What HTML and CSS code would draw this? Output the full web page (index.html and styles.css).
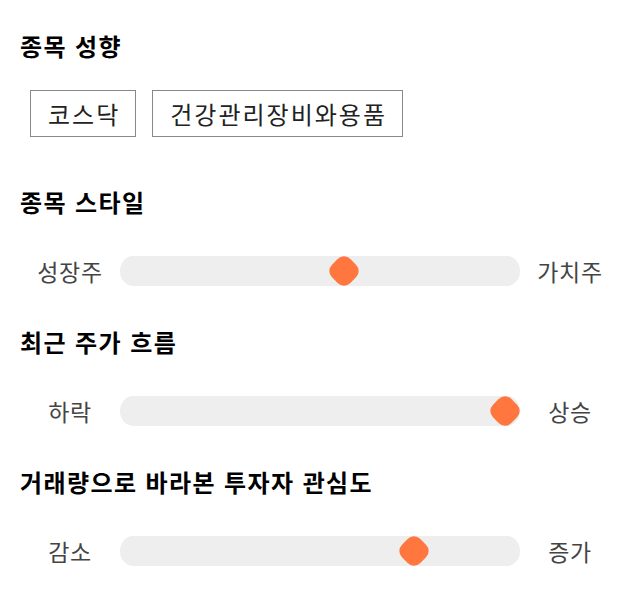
FILE: index.html
```html
<!DOCTYPE html>
<html lang="ko">
<head>
<meta charset="utf-8">
<link rel="stylesheet" href="styles.css">
</head>
<body>
<main class="page">
  <section class="section first">
    <h2 class="title">종목 성향</h2>
    <div class="chips">
      <span class="chip">코스닥</span>
      <span class="chip">건강관리장비와용품</span>
    </div>
  </section>

  <section class="section after-chips">
    <h2 class="title">종목 스타일</h2>
    <div class="slider-row">
      <span class="side">성장주</span>
      <div class="track"><span class="thumb" style="--v:0.565"></span></div>
      <span class="side">가치주</span>
    </div>
  </section>

  <section class="section">
    <h2 class="title">최근 주가 흐름</h2>
    <div class="slider-row">
      <span class="side">하락</span>
      <div class="track"><span class="thumb" style="--v:1"></span></div>
      <span class="side">상승</span>
    </div>
  </section>

  <section class="section">
    <h2 class="title">거래량으로 바라본 투자자 관심도</h2>
    <div class="slider-row">
      <span class="side">감소</span>
      <div class="track"><span class="thumb" style="--v:0.755"></span></div>
      <span class="side">증가</span>
    </div>
  </section>
</main>
</body>
</html>
```

FILE: styles.css
```css
* { box-sizing: border-box; }

html, body {
  margin: 0;
  padding: 0;
  background: #ffffff;
}

body {
  font-family: "Noto Sans CJK KR", "Noto Sans", sans-serif;
  color: #111111;
}

.page {
  width: 640px;
  padding: 31px 20px 0 20px;
}

.section {
  margin-top: 41px;
}

.section.first {
  margin-top: 0;
}

.section.after-chips {
  margin-top: 50px;
}

.title {
  margin: 0;
  font-size: 24px;
  line-height: 30px;
  font-weight: 700;
  color: #000000;
  letter-spacing: 1.4px;
}

.chips {
  display: flex;
  gap: 16px;
  margin-top: 29px;
  padding-left: 10px;
}

.chip {
  display: flex;
  align-items: center;
  height: 47px;
  padding: 0 15px 0 17px;
  border: 1px solid #888888;
  font-size: 24px;
  letter-spacing: 2px;
  color: #222222;
}

.slider-row {
  display: flex;
  align-items: center;
  margin-top: 39px;
  height: 30px;
}

.side {
  width: 100px;
  text-align: center;
  font-size: 23px;
  line-height: 30px;
  letter-spacing: 0.6px;
  color: #444444;
}

.track {
  position: relative;
  flex: 1;
  height: 30px;
  background: #eeeeee;
  border-radius: 13px / 15px;
}

.thumb {
  position: absolute;
  top: 2px;
  left: calc((100% - 30px) * var(--v) + 2px);
  width: 26px;
  height: 26px;
  background: #ff763f;
  border-radius: 9px;
  transform: rotate(45deg);
}
```
